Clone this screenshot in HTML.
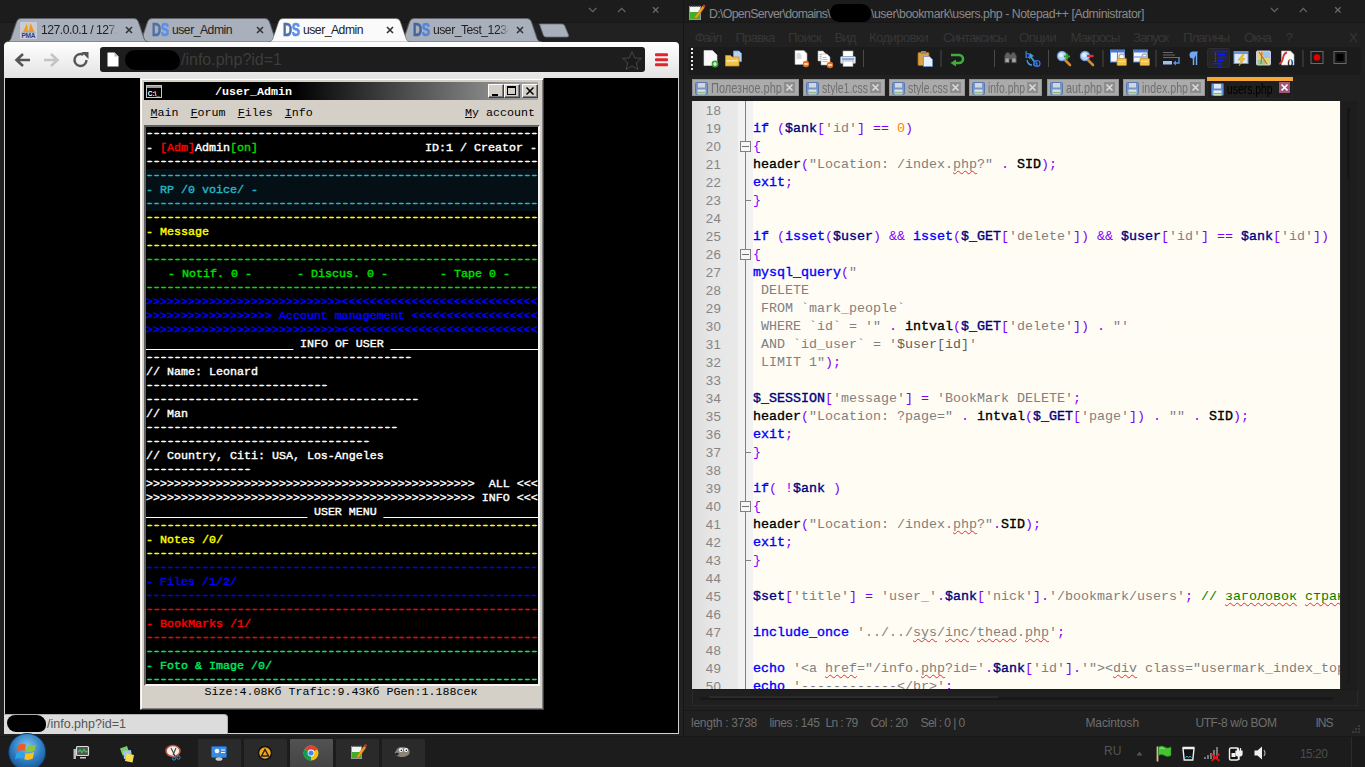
<!DOCTYPE html><html><head><meta charset="utf-8"><title>screenshot</title><style>
*{box-sizing:border-box}
html,body{margin:0;padding:0}
body{width:1365px;height:767px;position:relative;overflow:hidden;background:#1c1c1c;font-family:"Liberation Sans",sans-serif}
.a{position:absolute}
.mono{font-family:"Liberation Mono",monospace}
/* chrome */
#chrome{left:0;top:0;width:684px;height:736px;background:#212121}
.titlebar{left:0;top:0;height:22.5px;background:#1c1c1c;border-bottom:1.5px solid #171717}
.tabtxt{font-size:12.2px;letter-spacing:-.5px;color:#222;white-space:nowrap;overflow:hidden}
#toolbar{left:4px;top:42px;width:675px;height:36px;background:linear-gradient(#ffffff,#f4f4f4 40%,#e3e3e3);border-radius:4px 4px 0 0}
#omni{left:100px;top:47px;width:545px;height:25px;background:#1d1d1d;border-radius:3px}
#page{left:4px;top:78px;width:675px;height:656px;background:#000;border-right:1px solid #cfcfcf;border-left:1px solid #d4d4d4;border-bottom:1px solid #d4d4d4}
/* inner win */
#win{left:140px;top:78px;width:404px;height:632px;background:#d4d0c8;border:1px solid;border-color:#e8e6e0 #404040 #404040 #e8e6e0;box-shadow:inset 1px 1px 0 #fff, inset -1px -1px 0 #808080}
#wtitle{left:3px;top:3px;width:394px;height:18px;background:linear-gradient(90deg,#000 0,#000 38%,#a8a8a8 100%)}
#wtitle .t{left:71px;top:3px;font:bold 11.667px "Liberation Mono",monospace;color:#fff;white-space:pre}
#wmenu{left:3px;top:22px;width:394px;height:24px;font:11.667px/24px "Liberation Mono",monospace;color:#000;white-space:pre}
#wbody{left:3px;top:46px;width:396px;height:561px;background:#000;border:2px solid;border-color:#606060 #f4f4f4 #f4f4f4 #606060;overflow:hidden}
.ln{position:absolute;left:0;width:392px;height:14px;font:11.667px/14px "Liberation Mono",monospace;-webkit-text-stroke:.4px currentColor;white-space:pre;overflow:hidden;color:#fff}
.dl{position:relative;top:-1px;text-shadow:1px 0 0 currentColor,-.7px 0 0 currentColor}
.ul{position:relative;top:2px}
#wfoot{left:3px;top:606px;width:394px;height:14px;font:11.667px/14px "Liberation Mono",monospace;color:#000;text-align:center;white-space:pre}
.wb{top:2px;width:16px;height:14px;background:#d4d0c8;border:1px solid;border-color:#fff #404040 #404040 #fff;box-shadow:inset -1px -1px 0 #808080}
/* npp */
#npp{left:684px;top:0;width:681px;height:736px;background:#202020}
#ed{left:692px;top:101px;width:648px;height:588px;background:#fffcf4;overflow:hidden}
#lnm{left:0;top:0;width:46px;height:100%;background:linear-gradient(90deg,#dcdcdc,#e6e6e6 40%,#e9e9e9)}
#fold{left:46px;top:0;width:15px;height:100%;background:#f2f2f2}
.cl{position:absolute;left:61px;margin-top:1px;height:18px;font:13.333px/18px "Liberation Mono",monospace;white-space:pre;color:#000}
.num{position:absolute;left:0;width:29px;height:18px;text-align:right;font:13.3px/19px "Liberation Sans",sans-serif;color:#858585;letter-spacing:.2px}
.k{color:#0000ff;-webkit-text-stroke:.36px #0000ff}.b{-webkit-text-stroke:.36px currentColor}.s{color:#808080}.o{color:#8000ff}.n{color:#ff8000}.c{color:#008000}.v{color:#000080}
.sq{text-decoration:underline wavy #e03030 1px;text-underline-offset:1.5px;text-decoration-skip-ink:none}
.sqg{text-decoration:underline wavy #e03030 1px;text-underline-offset:1.5px;text-decoration-skip-ink:none}
.hl{background:#fefcf5}
.ntab{top:79px;height:17px;background:#ababab;border:1px solid #949494;font:13.5px/16px "Liberation Sans",sans-serif;color:#6f6f6f;white-space:nowrap;overflow:hidden}
.nt{top:5px;height:18px;font-size:12.3px;line-height:18px;color:#8a8a8a;white-space:nowrap}
.nm{top:28px;height:19px;font-size:13.3px;line-height:19px;color:#363636;white-space:nowrap;}
.st{top:715px;height:17px;font-size:12px;line-height:17px;color:#6e6e6e;white-space:nowrap}
#taskbar{left:0;top:736px;width:1365px;height:31px;background:#1c1c1c;border-top:1px solid #181818}
</style></head><body>
<div id="chrome" class="a">
<div class="a titlebar" style="width:684px"></div>
</div>
<svg class="a" style="left:0;top:0" width="684" height="44" viewBox="0 0 684 44">
<path d="M399.5,42 Q402.5,42 403.8,39 L409.6,21.8 Q410.8,18.5 414,18.5 L527,18.5 Q530.2,18.5 531.4,21.8 L537.2,39 Q538.5,42 541.5,42 Z" fill="#a9b0bc" stroke="#5d626b" stroke-width="1"/>
<path d="M137.5,42 Q140.5,42 141.8,39 L147.6,21.8 Q148.8,18.5 152,18.5 L265,18.5 Q268.2,18.5 269.4,21.8 L275.2,39 Q276.5,42 279.5,42 Z" fill="#a9b0bc" stroke="#5d626b" stroke-width="1"/>
<path d="M6.5,42 Q9.5,42 10.8,39 L16.6,21.8 Q17.8,18.5 21,18.5 L134,18.5 Q137.2,18.5 138.4,21.8 L144.2,39 Q145.5,42 148.5,42 Z" fill="#a9b0bc" stroke="#5d626b" stroke-width="1"/>
<path d="M539.5,24 L562,24 Q564,24 564.8,26 L568.5,35 Q569,37 567,37 L546,37 Q544,37 543.3,35 Z" fill="#a9b0bc" stroke="#6a6f78" stroke-width=".8"/>
<path d="M268.5,42 Q271.5,42 272.8,39 L278.6,21.8 Q279.8,18.5 283,18.5 L396,18.5 Q399.2,18.5 400.4,21.8 L406.2,39 Q407.5,42 410.5,42 Z" fill="#fafafa" stroke="#666" stroke-width=".6"/>
<path d="M589,8 l3.700,3.700 l3.700,-3.700" fill="none" stroke="#666" stroke-width="1.200"/>
<path d="M618,12 l3.700,-3.700 l3.700,3.700" fill="none" stroke="#666" stroke-width="1.200"/>
<path d="M653,7.200 l5.400,5.400 M658.400,7.200 l-5.400,5.400" fill="none" stroke="#6c6c6c" stroke-width="1.300"/>
</svg>
<svg class="a" style="left:20px;top:22px" width="17" height="17" viewBox="0 0 17 17"><rect width="17" height="17" fill="#c9ccd2"/><path d="M3,10 L7,1.5 L8,10 Z M8.5,10 L10.5,1 L14.5,10 Z" fill="#f39a1d"/><path d="M1.5,10.2 Q8,8.5 15.5,10.2 L15.5,10.8 L1.5,10.8Z" fill="#9aa"/><text x="8.5" y="16.4" text-anchor="middle" font-family="Liberation Sans,sans-serif" font-size="6.6" font-weight="bold" fill="#3a3a8c" textLength="14">PMA</text></svg>
<div class="a" style="left:152px;top:20px;width:18px;height:20px;font-weight:bold;font-size:19px;line-height:20px;letter-spacing:-.5px;white-space:nowrap;transform:scaleX(.66);transform-origin:0 0;-webkit-text-stroke:.7px"><span style="-webkit-text-stroke-color:#4f6fa8;color:#4f6fa8">D</span><span style="color:#5b8fe8;-webkit-text-stroke-color:#5b8fe8">S</span></div>
<div class="a" style="left:283px;top:20px;width:18px;height:20px;font-weight:bold;font-size:19px;line-height:20px;letter-spacing:-.5px;white-space:nowrap;transform:scaleX(.66);transform-origin:0 0;-webkit-text-stroke:.7px"><span style="-webkit-text-stroke-color:#4f6fa8;color:#4f6fa8">D</span><span style="color:#5b8fe8;-webkit-text-stroke-color:#5b8fe8">S</span></div>
<div class="a" style="left:413px;top:20px;width:18px;height:20px;font-weight:bold;font-size:19px;line-height:20px;letter-spacing:-.5px;white-space:nowrap;transform:scaleX(.66);transform-origin:0 0;-webkit-text-stroke:.7px"><span style="-webkit-text-stroke-color:#45659c;color:#45659c">D</span><span style="color:#5585dc;-webkit-text-stroke-color:#5585dc">S</span></div>
<div class="a tabtxt" style="left:41px;top:22px;width:77px;height:17px;line-height:17px;-webkit-mask-image:linear-gradient(90deg,#000 86%,transparent 100%);mask-image:linear-gradient(90deg,#000 86%,transparent 100%)">127.0.0.1 / 127.0</div>
<div class="a tabtxt" style="left:172px;top:22px;width:70px;height:17px;line-height:17px">user_Admin</div>
<div class="a tabtxt" style="left:303px;top:22px;width:70px;height:17px;line-height:17px">user_Admin</div>
<div class="a tabtxt" style="left:433px;top:22px;width:76px;height:17px;line-height:17px;-webkit-mask-image:linear-gradient(90deg,#000 86%,transparent 100%);mask-image:linear-gradient(90deg,#000 86%,transparent 100%)">user_Test_12345</div>
<svg class="a" style="left:124px;top:25px" width="10" height="10" viewBox="0 0 10 10"><path d="M2,2 L8,8 M8,2 L2,8" stroke="#333" stroke-width="1.6" fill="none"/></svg>
<svg class="a" style="left:255px;top:25px" width="10" height="10" viewBox="0 0 10 10"><path d="M2,2 L8,8 M8,2 L2,8" stroke="#333" stroke-width="1.6" fill="none"/></svg>
<svg class="a" style="left:385px;top:25px" width="10" height="10" viewBox="0 0 10 10"><path d="M2,2 L8,8 M8,2 L2,8" stroke="#333" stroke-width="1.6" fill="none"/></svg>
<svg class="a" style="left:515px;top:25px" width="10" height="10" viewBox="0 0 10 10"><path d="M2,2 L8,8 M8,2 L2,8" stroke="#333" stroke-width="1.6" fill="none"/></svg>
<div class="a" style="left:683px;top:0;width:1px;height:737px;background:#151515"></div>
<div id="toolbar" class="a"></div><div id="omni" class="a"></div>
<svg class="a" style="left:5px;top:42px" width="674" height="36" viewBox="5 42 674 36">
<path d="M30,60 L17,60 M23,54 L16.5,60 L23,66" fill="none" stroke="#555" stroke-width="2.6" stroke-linejoin="miter"/>
<path d="M44,60 L57,60 M51,54 L57.5,60 L51,66" fill="none" stroke="#c4c4c4" stroke-width="2.6"/>
<path d="M86.5,60 A6,6 0 1 1 83.5,54.8" fill="none" stroke="#555" stroke-width="2.4"/><path d="M81.5,52 L88.5,52 L88.5,59 Z" fill="#555"/>
<path d="M107.5,52.5 L114.5,52.5 L118.5,56.5 L118.5,66.5 L107.5,66.5 Z" fill="#fff"/><path d="M114.5,52.5 L114.5,56.5 L118.5,56.5 Z" fill="#bbb"/>
<path d="M632,51.5 L634.6,58 L641.5,58.4 L636.2,62.8 L638,69.5 L632,65.8 L626,69.5 L627.8,62.8 L622.5,58.4 L629.4,58 Z" fill="#1a1a1a" stroke="#474747" stroke-width="1"/>
<rect x="655" y="53.2" width="13" height="3" rx="1" fill="#e0242a"/>
<rect x="655" y="58.2" width="13" height="3" rx="1" fill="#e0242a"/>
<rect x="655" y="63.2" width="13" height="3" rx="1" fill="#e0242a"/>
</svg>
<div class="a" style="left:181px;top:49px;height:22px;font-size:16px;line-height:22px;color:#3c3c3c;white-space:nowrap">/info.php?id=1</div>
<div class="a" style="left:125px;top:50px;width:55px;height:20px;background:#000;border-radius:10px 12px 9px 11px"></div>
<div id="page" class="a"></div>
<div id="win" class="a">
<div id="wtitle" class="a"><span class="a t">/user_Admin</span>
<div class="a wb" style="left:344px"><i class="a" style="left:3px;top:9px;width:6px;height:2px;background:#000"></i></div><div class="a wb" style="left:360px"><i class="a" style="left:2px;top:1px;width:9px;height:9px;border:1px solid #000;border-top-width:2px"></i></div><div class="a wb" style="left:378px"><svg class="a" style="left:2px;top:1px" width="10" height="10" viewBox="0 0 10 10"><path d="M1.500,1.500 L8.500,8.500 M8.500,1.500 L1.500,8.500" stroke="#000" stroke-width="1.500"/></svg></div>
<svg class="a" style="left:2px;top:3px" width="17" height="14" viewBox="0 0 17 14"><rect x=".5" y=".5" width="15" height="12" fill="#000" stroke="#c8c8c8"/><rect x="1" y="1" width="14" height="2" fill="#9a9a9a"/><text x="1.800" y="10.500" font-family="Liberation Sans,sans-serif" font-size="6.500" font-weight="bold" fill="#fff" textLength="12">C:\_</text></svg>
</div>
<div id="wmenu" class="a"><span class="a" style="left:6.5px"><u>M</u>ain</span><span class="a" style="left:46.6px"><u>F</u>orum</span><span class="a" style="left:93.7px"><u>F</u>iles</span><span class="a" style="left:140.8px"><u>I</u>nfo</span><span class="a" style="right:3px"><u>M</u>y account</span></div>
<div id="wbody" class="a">
<div class="ln" style="top:0px;color:#fff"><span class="dl">--------------------------------------------------------</span></div>
<div class="ln" style="top:14px;color:#fff"><span>- </span><span style="color:#f00">[Adm]</span>Admin<span style="color:#0d0">[on]</span><span class="a" style="right:1px">ID:1 / Creator -</span></div>
<div class="ln" style="top:28px;color:#fff"><span class="dl">--------------------------------------------------------</span></div>
<div class="ln" style="top:42px;color:#22b8c8;background:#050f16"><span class="dl">--------------------------------------------------------</span></div>
<div class="ln" style="top:56px;color:#22b8c8;background:#050f16">- RP /0 voice/ -</div>
<div class="ln" style="top:70px;color:#22b8c8;background:#050f16"><span class="dl">--------------------------------------------------------</span></div>
<div class="ln" style="top:84px;color:#ffff00"><span class="dl">--------------------------------------------------------</span></div>
<div class="ln" style="top:98px;color:#ffff00">- Message</div>
<div class="ln" style="top:112px;color:#ffff00"><span class="dl">--------------------------------------------------------</span></div>
<div class="ln" style="top:126px;color:#00e000"><span class="dl">--------------------------------------------------------</span></div>
<div class="ln" style="top:140px;color:#00e000"><span class="a" style="left:22px">- Notif. 0 -</span><span class="a" style="left:151px">- Discus. 0 -</span><span class="a" style="left:294px">- Tape 0 -</span></div>
<div class="ln" style="top:154px;color:#00e000"><span class="dl">--------------------------------------------------------</span></div>
<div class="ln" style="top:168px;color:#0000ff">&gt;&gt;&gt;&gt;&gt;&gt;&gt;&gt;&gt;&gt;&gt;&gt;&gt;&gt;&gt;&gt;&gt;&gt;&gt;&gt;&gt;&gt;&gt;&gt;&gt;&gt;&gt;&gt;&lt;&lt;&lt;&lt;&lt;&lt;&lt;&lt;&lt;&lt;&lt;&lt;&lt;&lt;&lt;&lt;&lt;&lt;&lt;&lt;&lt;&lt;&lt;&lt;&lt;&lt;&lt;&lt;</div>
<div class="ln" style="top:182px;color:#0000ff">&gt;&gt;&gt;&gt;&gt;&gt;&gt;&gt;&gt;&gt;&gt;&gt;&gt;&gt;&gt;&gt;&gt;&gt; Account management &lt;&lt;&lt;&lt;&lt;&lt;&lt;&lt;&lt;&lt;&lt;&lt;&lt;&lt;&lt;&lt;&lt;&lt;</div>
<div class="ln" style="top:196px;color:#0000ff">&gt;&gt;&gt;&gt;&gt;&gt;&gt;&gt;&gt;&gt;&gt;&gt;&gt;&gt;&gt;&gt;&gt;&gt;&gt;&gt;&gt;&gt;&gt;&gt;&gt;&gt;&gt;&gt;&lt;&lt;&lt;&lt;&lt;&lt;&lt;&lt;&lt;&lt;&lt;&lt;&lt;&lt;&lt;&lt;&lt;&lt;&lt;&lt;&lt;&lt;&lt;&lt;&lt;&lt;&lt;&lt;</div>
<div class="ln" style="top:210px"><span class="ul">_____________________</span> INFO OF USER <span class="ul">_____________________</span></div>
<div class="ln" style="top:224px;color:#fff"><span class="dl">--------------------------------------</span></div>
<div class="ln" style="top:238px;color:#fff">// Name: Leonard</div>
<div class="ln" style="top:252px;color:#fff"><span class="dl">--------------------------</span></div>
<div class="ln" style="top:266px;color:#fff"><span class="dl">---------------------------------------</span></div>
<div class="ln" style="top:280px;color:#fff">// Man</div>
<div class="ln" style="top:294px;color:#fff"><span class="dl">------------------------------------</span></div>
<div class="ln" style="top:308px;color:#fff"><span class="dl">--------------------------------</span></div>
<div class="ln" style="top:322px;color:#fff">// Country, Citi: USA, Los-Angeles</div>
<div class="ln" style="top:336px;color:#fff"><span class="dl">---------------</span></div>
<div class="ln" style="top:350px;color:#fff">&gt;&gt;&gt;&gt;&gt;&gt;&gt;&gt;&gt;&gt;&gt;&gt;&gt;&gt;&gt;&gt;&gt;&gt;&gt;&gt;&gt;&gt;&gt;&gt;&gt;&gt;&gt;&gt;&gt;&gt;&gt;&gt;&gt;&gt;&gt;&gt;&gt;&gt;&gt;&gt;&gt;&gt;&gt;&gt;&gt;&gt;&gt;  ALL &lt;&lt;&lt;</div>
<div class="ln" style="top:364px;color:#fff">&gt;&gt;&gt;&gt;&gt;&gt;&gt;&gt;&gt;&gt;&gt;&gt;&gt;&gt;&gt;&gt;&gt;&gt;&gt;&gt;&gt;&gt;&gt;&gt;&gt;&gt;&gt;&gt;&gt;&gt;&gt;&gt;&gt;&gt;&gt;&gt;&gt;&gt;&gt;&gt;&gt;&gt;&gt;&gt;&gt;&gt;&gt; INFO &lt;&lt;&lt;</div>
<div class="ln" style="top:378px"><span class="ul">_______________________</span> USER MENU <span class="ul">______________________</span></div>
<div class="ln" style="top:392px;color:#ffff00"><span class="dl">--------------------------------------------------------</span></div>
<div class="ln" style="top:406px;color:#ffff00">- Notes /0/</div>
<div class="ln" style="top:420px;color:#ffff00"><span class="dl">--------------------------------------------------------</span></div>
<div class="ln" style="top:434px;color:#0000ff"><span class="dl">--------------------------------------------------------</span></div>
<div class="ln" style="top:448px;color:#0000ff">- Files /1/2/</div>
<div class="ln" style="top:462px;color:#0000ff"><span class="dl">--------------------------------------------------------</span></div>
<div class="ln" style="top:476px;color:#ff0000"><span class="dl">--------------------------------------------------------</span></div>
<div class="ln" style="top:490px;color:#ff0000">- BookMarks /1/</div>
<div class="ln" style="top:504px;color:#ff0000"><span class="dl">--------------------------------------------------------</span></div>
<div class="ln" style="top:518px;color:#00e860"><span class="dl">--------------------------------------------------------</span></div>
<div class="ln" style="top:532px;color:#00e860">- Foto &amp; Image /0/</div>
<div class="ln" style="top:546px;color:#00e860"><span class="dl">--------------------------------------------------------</span></div>
</div>
<div id="wfoot" class="a">Size:4.08Кб Trafic:9.43Кб PGen:1.188сек</div>
</div>
<div class="a" style="left:4px;top:714px;width:224px;height:20px;background:#dcdcdc;border-top:1px solid #b0b0b0;border-right:1px solid #b0b0b0;border-radius:0 4px 0 0;font:12.5px/18px 'Liberation Sans',sans-serif;color:#555;padding-left:43px;white-space:nowrap">/info.php?id=1</div>
<div class="a" style="left:7px;top:715px;width:39px;height:17px;background:#000;border-radius:8px 9px 7px 9px"></div>
<div id="npp" class="a">
<div class="a titlebar" style="width:681px"></div>
</div>
<svg class="a" style="left:684px;top:0" width="681" height="26" viewBox="684 0 681 26">
<path d="M1271,8 l3.500,3.700 l3.500,-3.700" fill="none" stroke="#666" stroke-width="1.200"/>
<path d="M1299.800,12 l3.500,-3.700 l3.500,3.700" fill="none" stroke="#666" stroke-width="1.200"/>
<path d="M1335.200,7.200 l5.400,5.400 M1340.600,7.200 l-5.400,5.400" fill="none" stroke="#6c6c6c" stroke-width="1.300"/>
<rect x="689.5" y="6.5" width="11" height="13" fill="#f4f4f4" stroke="#999" stroke-width="1"/><rect x="690" y="12" width="10" height="7" fill="#3fae2a"/><path d="M690,6 h11" stroke="#444" stroke-width="1.5" stroke-dasharray="1.2 1"/><path d="M695,16.5 L702.5,6 L704.5,7.5 L697,18 L694.5,18.5 Z" fill="#f0a020" stroke="#a86a10" stroke-width=".5"/><circle cx="704" cy="6" r="1.3" fill="#e03030"/>
</svg>
<div class="a nt" style="left:709px;letter-spacing:-0.653px">D:\OpenServer\domains\</div>
<div class="a nt" style="left:871px;letter-spacing:-0.456px">\user\bookmark\users.php - Notepad++ [Administrator]</div>
<div class="a nm" style="left:694.7px;letter-spacing:-1.675px">Файл</div>
<div class="a nm" style="left:735.5px;letter-spacing:-0.988px">Правка</div>
<div class="a nm" style="left:788px;letter-spacing:-0.771px">Поиск</div>
<div class="a nm" style="left:834.5px;letter-spacing:-1.021px">Вид</div>
<div class="a nm" style="left:869px;letter-spacing:-0.683px">Кодировки</div>
<div class="a nm" style="left:943px;letter-spacing:-1.098px">Синтаксисы</div>
<div class="a nm" style="left:1019px;letter-spacing:-0.605px">Опции</div>
<div class="a nm" style="left:1070.5px;letter-spacing:-0.921px">Макросы</div>
<div class="a nm" style="left:1133px;letter-spacing:-1.1px">Запуск</div>
<div class="a nm" style="left:1183px;letter-spacing:-1.129px">Плагины</div>
<div class="a nm" style="left:1244px;letter-spacing:-0.976px">Окна</div>
<div class="a nm" style="left:1285.5px;letter-spacing:-1.397px">?</div>
<div class="a nm" style="left:1349px;letter-spacing:-0.872px">X</div>
<div class="a" style="left:688px;top:47px;width:673px;height:28px;background:#1b1b1b;border-radius:4px"></div>
<div class="a" style="left:691px;top:48px;width:2px;height:24px;background:repeating-linear-gradient(#e8e8e8 0,#e8e8e8 2px,transparent 2px,transparent 4px)"></div>
<svg class="a" style="left:684px;top:47px" width="681" height="28" viewBox="684 47 681 28">
<rect x="863" y="50" width="1" height="17" fill="#4a4a4a"/>
<rect x="940.5" y="50" width="1" height="17" fill="#4a4a4a"/>
<rect x="994" y="50" width="1" height="17" fill="#4a4a4a"/>
<rect x="1048" y="50" width="1" height="17" fill="#4a4a4a"/>
<rect x="1102.5" y="50" width="1" height="17" fill="#4a4a4a"/>
<rect x="1155.5" y="50" width="1" height="17" fill="#4a4a4a"/>
<rect x="1302.5" y="50" width="1" height="17" fill="#4a4a4a"/>
<path d="M704,50.500 h8.500 l4.500,4.500 v10.500 h-13 z" fill="#f8f8f8" stroke="#ddd" stroke-width=".6" stroke-linejoin="round"/><circle cx="715" cy="64" r="3.4" fill="#3aa535"/><path d="M713,64 h4 M715,62 v4" stroke="#fff" stroke-width="1.2"/>
<path d="M733.5,51 h5.5 l2.5,2.5 v8 h-8z" fill="#b9d2f3" stroke="#6f9bdc" stroke-width=".8"/><path d="M725.5,55.5 h5 l1.5,1.5 h7 v9 h-13.5z" fill="#f3c14e" stroke="#c8901c" stroke-width=".8"/><rect x="726.5" y="60" width="11.5" height="1.6" fill="#fbe3a0"/>
<path d="M795,50.5 h9 l3,3 v11 h-12 z" fill="#fff" stroke="#aaa" stroke-width=".6"/><path d="M796.5,54.0 h4 M796.5,56.0 h5 M796.5,58.0 h5" stroke="#999" stroke-width=".7"/><circle cx="806" cy="64" r="3.2" fill="#e8701c"/><rect x="804.2" y="63.3" width="3.6" height="1.4" fill="#fff"/>
<path d="M818,51 h5 l3,3 v7 h-8 z" fill="#fff" stroke="#aaa" stroke-width=".6"/><path d="M819.5,54.5 h4 M819.5,56.5 h5 M819.5,58.5 h5" stroke="#999" stroke-width=".7"/><path d="M821,54 h6 l3,3 v8 h-9 z" fill="#fff" stroke="#aaa" stroke-width=".6"/><path d="M822.5,57.5 h4 M822.5,59.5 h5 M822.5,61.5 h5" stroke="#999" stroke-width=".7"/><circle cx="830" cy="65" r="3.2" fill="#e8701c"/><rect x="828.2" y="64.3" width="3.6" height="1.4" fill="#fff"/>
<rect x="843" y="51" width="10" height="6" fill="#fff" stroke="#aaa" stroke-width=".6"/><rect x="840.5" y="56.5" width="15" height="7" rx="1" fill="#dfe6f0" stroke="#8a97ab" stroke-width=".8"/><rect x="843" y="61" width="10" height="5.5" fill="#fff" stroke="#8a97ab" stroke-width=".6"/><rect x="842" y="58.3" width="12" height="1.4" fill="#6a8fd0"/>
<rect x="918" y="52.5" width="11" height="13" rx="1" fill="#d9a046" stroke="#9a6a1c" stroke-width=".8"/><rect x="921" y="51" width="5" height="3" fill="#888"/><path d="M923.5,56.5 h6 l3,3 v7 h-9z" fill="#e8f0fc" stroke="#6a8fd0" stroke-width=".8"/>
<path d="M951,55 h8 a4,4 0 0 1 0,8 h-4" fill="none" stroke="#3cae3a" stroke-width="2.6"/><path d="M956,59.5 L950.5,63 L956,66.5Z" fill="#3cae3a"/>
<path d="M1004.500,56 l2,-3.500 h2.500 l1,2 h1 l1,-2 h2.500 l2,3.500 v7 h-5 v-3.500 h-2 v3.500 h-5z" fill="#5e5e5e" stroke="#3a3a3a" stroke-width=".6"/><rect x="1005.500" y="58.500" width="3.300" height="3.500" fill="#a8a8a8"/><rect x="1012.300" y="58.500" width="3.300" height="3.500" fill="#a8a8a8"/>
<text x="1025" y="58" font-family="Liberation Sans,sans-serif" font-size="9" font-weight="bold" fill="#3b7be0">b</text><text x="1033" y="66" font-family="Liberation Sans,sans-serif" font-size="9" font-weight="bold" fill="#3b7be0">a</text><path d="M1030,53 l4,3 l-2,1 l3,4 l-1.500,1 l-3,-4 l-1.500,1.500z" fill="#3aa0d8"/><path d="M1027,60 q1,5 5,5" fill="none" stroke="#3aa0d8" stroke-width="1.300"/><circle cx="1037" cy="63.500" r="3" fill="none" stroke="#3b7be0" stroke-width="1.200"/>
<path d="M1064.5,59.500 l5.500,5.500" stroke="#d08a30" stroke-width="2.600" stroke-linecap="round"/><circle cx="1062" cy="56" r="4.600" fill="#b4d6f8" stroke="#6a9ad8" stroke-width="1.200"/><circle cx="1061" cy="55" r="2" fill="#e4f0fc"/><path d="M1064,56.500 h6 M1067,53.500 v6" stroke="#2fa22f" stroke-width="2.200"/>
<path d="M1087.5,59.500 l5.500,5.500" stroke="#d08a30" stroke-width="2.600" stroke-linecap="round"/><circle cx="1085" cy="56" r="4.600" fill="#b4d6f8" stroke="#6a9ad8" stroke-width="1.200"/><circle cx="1084" cy="55" r="2" fill="#e4f0fc"/><path d="M1087,56 h6.500" stroke="#e03030" stroke-width="2.400"/>
<rect x="1110.5" y="50" width="14" height="12" fill="#f4f8fe" stroke="#5a86d0" stroke-width="1"/><rect x="1110.5" y="50" width="14" height="2.500" fill="#4a7ad0"/><path d="M1117.5,52 v10" stroke="#5a86d0" stroke-width="1"/><rect x="1117" y="58.500" width="9.500" height="7" rx=".8" fill="#f2c24a" stroke="#b8861c" stroke-width=".7"/><path d="M1119,58.500 v-1.800 a2.700,2.700 0 0 1 5.400,0 v1.800" fill="none" stroke="#b0b0b0" stroke-width="1.300"/><rect x="1118" y="61" width="7.500" height="1" fill="#fbe39a"/>
<rect x="1133.5" y="50" width="14" height="12" fill="#f4f8fe" stroke="#5a86d0" stroke-width="1"/><rect x="1133.5" y="50" width="14" height="2.500" fill="#4a7ad0"/><path d="M1133.5,57 h14" stroke="#5a86d0" stroke-width="1"/><rect x="1140" y="58.500" width="9.500" height="7" rx=".8" fill="#f2c24a" stroke="#b8861c" stroke-width=".7"/><path d="M1142,58.500 v-1.800 a2.700,2.700 0 0 1 5.400,0 v1.800" fill="none" stroke="#b0b0b0" stroke-width="1.300"/><rect x="1141" y="61" width="7.500" height="1" fill="#fbe39a"/>
<path d="M1163,52.500 h10 M1163,55 h12 M1163,57.500 h16" stroke="#6a6a6a" stroke-width="1.200"/><rect x="1163" y="61" width="9" height="3.500" fill="#9dc0f0"/><path d="M1179,57 v6 h-4" fill="none" stroke="#5a96e8" stroke-width="1.300"/><path d="M1176,60.500 l-3,2.500 l3,2.500z" fill="#5a96e8"/>
<path d="M1196.500,52 v13 M1193.500,52 v13" stroke="#6fa8f4" stroke-width="1.500"/><path d="M1198,51.500 h-5 a3.500,3.500 0 0 0 0,7 h1z" fill="#6fa8f4"/>
<rect x="1207.500" y="48.500" width="22" height="19" rx="2" fill="#262626" stroke="#2e2e2e"/>
<path d="M1213,51.500 h14 M1218,54.500 h7 M1218,57.500 h9 M1218,60.500 h6 M1213,63.500 h9 M1218,66 h3" stroke="#0a1cff" stroke-width="1.500"/><path d="M1215.500,53 v9" stroke="#e02020" stroke-width="1.200" stroke-dasharray="1.200 1.200"/>
<rect x="1234" y="51.500" width="14" height="12" fill="#dce8f8" stroke="#6a96d8" stroke-width="1"/><rect x="1234" y="51.500" width="14" height="2.500" fill="#6a96d8"/><path d="M1243,54 l-5,6 h3 l-2,6 l6,-7.500 h-3 l2,-4.500z" fill="#f2c230" stroke="#c89a10" stroke-width=".5"/>
<rect x="1256.500" y="51" width="14" height="14" rx="1" fill="#d6dc74" stroke="#c8c8e8" stroke-width="1"/><rect x="1263" y="52" width="7" height="6" fill="#9ec6ee"/><rect x="1257.500" y="60" width="8" height="4.500" fill="#8fd08a"/><path d="M1259,52 l8,12 M1262,52 l-1,12" stroke="#e85040" stroke-width="1.100"/>
<path d="M1281.500,51 h9 l3.500,3.500 v10.500 h-12.500z" fill="#fafafa" stroke="#bbb" stroke-width=".6"/><path d="M1279,64 q3,-1 4,-6 q1,-5 4,-5.500" fill="none" stroke="#e03030" stroke-width="1.800"/><text x="1287.500" y="64.500" font-family="Liberation Serif,serif" font-size="8.500" font-weight="bold" fill="#000">()</text>
<rect x="1311" y="51.500" width="12" height="12" fill="#1a1a1a" stroke="#6a6a6a" stroke-width="1"/><circle cx="1317" cy="57.500" r="3.300" fill="#e00000"/>
<rect x="1334" y="51.500" width="12" height="12" fill="#1a1a1a" stroke="#6a6a6a" stroke-width="1"/><rect x="1336.500" y="54" width="7" height="7" fill="#000"/>
</svg>
<div class="a ntab" style="left:692px;width:107px"><span class="a" style="left:18px;top:0;transform:scaleX(0.76);transform-origin:0 0;font-size:14.5px">Полезное.php</span></div>
<svg class="a" opacity=".72" style="left:695px;top:82px" width="13" height="13" viewBox="0 0 13 13"><rect x=".5" y=".5" width="12" height="12" rx="1" fill="#5f8fd8" stroke="#3a66b0"/><rect x="3" y="1" width="7" height="4.500" fill="#dfe8f6"/><rect x="2.500" y="7.500" width="8" height="5" fill="#f4f4f4"/><rect x="2.500" y="9.800" width="8" height="1.600" fill="#86c060"/></svg>
<svg class="a" style="left:784px;top:82px" width="11" height="11" viewBox="0 0 11 11"><rect width="11" height="11" fill="#8e8e8e"/><path d="M2.500,2.500 L8.500,8.500 M8.500,2.500 L2.500,8.500" stroke="#dadada" stroke-width="1.700"/></svg>
<div class="a ntab" style="left:803px;width:82px"><span class="a" style="left:18px;top:0;transform:scaleX(0.723);transform-origin:0 0;font-size:14.5px">style1.css</span></div>
<svg class="a" opacity=".72" style="left:806px;top:82px" width="13" height="13" viewBox="0 0 13 13"><rect x=".5" y=".5" width="12" height="12" rx="1" fill="#5f8fd8" stroke="#3a66b0"/><rect x="3" y="1" width="7" height="4.500" fill="#dfe8f6"/><rect x="2.500" y="7.500" width="8" height="5" fill="#f4f4f4"/><rect x="2.500" y="9.800" width="8" height="1.600" fill="#86c060"/></svg>
<svg class="a" style="left:870px;top:82px" width="11" height="11" viewBox="0 0 11 11"><rect width="11" height="11" fill="#8e8e8e"/><path d="M2.500,2.500 L8.500,8.500 M8.500,2.500 L2.500,8.500" stroke="#dadada" stroke-width="1.700"/></svg>
<div class="a ntab" style="left:889px;width:76px"><span class="a" style="left:18px;top:0;transform:scaleX(0.72);transform-origin:0 0;font-size:14.5px">style.css</span></div>
<svg class="a" opacity=".72" style="left:892px;top:82px" width="13" height="13" viewBox="0 0 13 13"><rect x=".5" y=".5" width="12" height="12" rx="1" fill="#5f8fd8" stroke="#3a66b0"/><rect x="3" y="1" width="7" height="4.500" fill="#dfe8f6"/><rect x="2.500" y="7.500" width="8" height="5" fill="#f4f4f4"/><rect x="2.500" y="9.800" width="8" height="1.600" fill="#86c060"/></svg>
<svg class="a" style="left:950px;top:82px" width="11" height="11" viewBox="0 0 11 11"><rect width="11" height="11" fill="#8e8e8e"/><path d="M2.500,2.500 L8.500,8.500 M8.500,2.500 L2.500,8.500" stroke="#dadada" stroke-width="1.700"/></svg>
<div class="a ntab" style="left:969px;width:73px"><span class="a" style="left:18px;top:0;transform:scaleX(0.717);transform-origin:0 0;font-size:14.5px">info.php</span></div>
<svg class="a" opacity=".72" style="left:972px;top:82px" width="13" height="13" viewBox="0 0 13 13"><rect x=".5" y=".5" width="12" height="12" rx="1" fill="#5f8fd8" stroke="#3a66b0"/><rect x="3" y="1" width="7" height="4.500" fill="#dfe8f6"/><rect x="2.500" y="7.500" width="8" height="5" fill="#f4f4f4"/><rect x="2.500" y="9.800" width="8" height="1.600" fill="#86c060"/></svg>
<svg class="a" style="left:1027px;top:82px" width="11" height="11" viewBox="0 0 11 11"><rect width="11" height="11" fill="#8e8e8e"/><path d="M2.500,2.500 L8.500,8.500 M8.500,2.500 L2.500,8.500" stroke="#dadada" stroke-width="1.700"/></svg>
<div class="a ntab" style="left:1047px;width:72px"><span class="a" style="left:18px;top:0;transform:scaleX(0.744);transform-origin:0 0;font-size:14.5px">aut.php</span></div>
<svg class="a" opacity=".72" style="left:1050px;top:82px" width="13" height="13" viewBox="0 0 13 13"><rect x=".5" y=".5" width="12" height="12" rx="1" fill="#5f8fd8" stroke="#3a66b0"/><rect x="3" y="1" width="7" height="4.500" fill="#dfe8f6"/><rect x="2.500" y="7.500" width="8" height="5" fill="#f4f4f4"/><rect x="2.500" y="9.800" width="8" height="1.600" fill="#86c060"/></svg>
<svg class="a" style="left:1104px;top:82px" width="11" height="11" viewBox="0 0 11 11"><rect width="11" height="11" fill="#8e8e8e"/><path d="M2.500,2.500 L8.500,8.500 M8.500,2.500 L2.500,8.500" stroke="#dadada" stroke-width="1.700"/></svg>
<div class="a ntab" style="left:1123px;width:82px"><span class="a" style="left:18px;top:0;transform:scaleX(0.731);transform-origin:0 0;font-size:14.5px">index.php</span></div>
<svg class="a" opacity=".72" style="left:1126px;top:82px" width="13" height="13" viewBox="0 0 13 13"><rect x=".5" y=".5" width="12" height="12" rx="1" fill="#5f8fd8" stroke="#3a66b0"/><rect x="3" y="1" width="7" height="4.500" fill="#dfe8f6"/><rect x="2.500" y="7.500" width="8" height="5" fill="#f4f4f4"/><rect x="2.500" y="9.800" width="8" height="1.600" fill="#86c060"/></svg>
<svg class="a" style="left:1190px;top:82px" width="11" height="11" viewBox="0 0 11 11"><rect width="11" height="11" fill="#8e8e8e"/><path d="M2.500,2.500 L8.500,8.500 M8.500,2.500 L2.500,8.500" stroke="#dadada" stroke-width="1.700"/></svg>
<div class="a" style="left:1207px;top:77px;width:86px;height:4px;background:#f5a833"></div>
<div class="a" style="left:1207px;top:81px;width:86px;height:18px;background:#1f1f1f;border:1px solid #262626;border-top:0"></div>
<svg class="a" style="left:1211px;top:83px" width="13" height="13" viewBox="0 0 13 13"><rect x=".5" y=".5" width="12" height="12" rx="1" fill="#5f8fd8" stroke="#3a66b0"/><rect x="3" y="1" width="7" height="4.500" fill="#dfe8f6"/><rect x="2.500" y="7.500" width="8" height="5" fill="#f4f4f4"/><rect x="2.500" y="9.800" width="8" height="1.600" fill="#86c060"/></svg>
<div class="a" style="left:1227px;top:81px;height:17px;font-size:14px;line-height:17px;color:#000;transform:scaleX(0.74);transform-origin:0 0;white-space:nowrap">users.php</div>
<svg class="a" style="left:1279px;top:82px" width="11" height="11" viewBox="0 0 11 11"><rect width="11" height="11" fill="#a05878"/><path d="M2.500,2.500 L8.500,8.500 M8.500,2.500 L2.500,8.500" stroke="#fff" stroke-width="1.700"/></svg>
<div class="a" style="left:830px;top:4px;width:41px;height:18px;background:#000;border-radius:9px 10px 8px 10px"></div>
<div id="ed" class="a"><div id="lnm" class="a"></div><div id="fold" class="a"></div>
<div class="num" style="top:0px">18</div>
<div class="num" style="top:18px">19</div>
<div class="cl" style="top:18px"><span class="k">if</span> <span class="o">(</span><span class="v b">$ank</span><span class="o">[</span><span class="s">'id'</span><span class="o">]</span> <span class="o">==</span> <span class="n">0</span><span class="o">)</span></div>
<div class="num" style="top:36px">20</div>
<div class="cl" style="top:36px"><span class="o">{</span></div>
<div class="num" style="top:54px">21</div>
<div class="cl" style="top:54px"><span class="b">header</span><span class="o">(</span><span class="s">"Location: /index.<span class="sq">php</span>?"</span> <span class="o">.</span> <span class="b">SID</span><span class="o">);</span></div>
<div class="num" style="top:72px">22</div>
<div class="cl" style="top:72px"><span class="k">exit</span><span class="o">;</span></div>
<div class="num" style="top:90px">23</div>
<div class="cl" style="top:90px"><span class="o">}</span></div>
<div class="num" style="top:108px">24</div>
<div class="num" style="top:126px">25</div>
<div class="cl" style="top:126px"><span class="k">if</span> <span class="o">(</span><span class="k">isset</span><span class="o">(</span><span class="v b">$user</span><span class="o">)</span> <span class="o">&amp;&amp;</span> <span class="k">isset</span><span class="o">(</span><span class="v b">$_GET</span><span class="o">[</span><span class="s">'delete'</span><span class="o">])</span> <span class="o">&amp;&amp;</span> <span class="v b">$user</span><span class="o">[</span><span class="s">'id'</span><span class="o">]</span> <span class="o">==</span> <span class="v b">$ank</span><span class="o">[</span><span class="s">'id'</span><span class="o">])</span></div>
<div class="num" style="top:144px">26</div>
<div class="cl" style="top:144px"><span class="o">{</span></div>
<div class="num" style="top:162px">27</div>
<div class="cl" style="top:162px"><span class="k">mysql_query</span><span class="o">(</span><span class="s hl">"                                                                                </span></div>
<div class="num" style="top:180px">28</div>
<div class="cl" style="top:180px"><span class="s hl"> DELETE                                                                                </span></div>
<div class="num" style="top:198px">29</div>
<div class="cl" style="top:198px"><span class="s hl"> FROM `mark_people`                                                                                </span></div>
<div class="num" style="top:216px">30</div>
<div class="cl" style="top:216px"><span class="s hl"> WHERE `id` = '"</span> <span class="o">.</span> <span class="b">intval</span><span class="o">(</span><span class="v b">$_GET</span><span class="o">[</span><span class="s">'delete'</span><span class="o">])</span> <span class="o">.</span> <span class="s hl">"'    </span></div>
<div class="num" style="top:234px">31</div>
<div class="cl" style="top:234px"><span class="s hl"> AND `id_user` = '<span style="color:#606060">$user[id]</span>'    </span><span class="hl">                                                                                      </span></div>
<div class="num" style="top:252px">32</div>
<div class="cl" style="top:252px"><span class="s"> LIMIT 1"</span><span class="o">);</span></div>
<div class="num" style="top:270px">33</div>
<div class="num" style="top:288px">34</div>
<div class="cl" style="top:288px"><span class="v b">$_SESSION</span><span class="o">[</span><span class="s">'message'</span><span class="o">]</span> <span class="o">=</span> <span class="s">'BookMark DELETE'</span><span class="o">;</span></div>
<div class="num" style="top:306px">35</div>
<div class="cl" style="top:306px"><span class="b">header</span><span class="o">(</span><span class="s">"Location: ?page="</span> <span class="o">.</span> <span class="b">intval</span><span class="o">(</span><span class="v b">$_GET</span><span class="o">[</span><span class="s">'page'</span><span class="o">])</span> <span class="o">.</span> <span class="s">""</span> <span class="o">.</span> <span class="b">SID</span><span class="o">);</span></div>
<div class="num" style="top:324px">36</div>
<div class="cl" style="top:324px"><span class="k">exit</span><span class="o">;</span></div>
<div class="num" style="top:342px">37</div>
<div class="cl" style="top:342px"><span class="o">}</span></div>
<div class="num" style="top:360px">38</div>
<div class="num" style="top:378px">39</div>
<div class="cl" style="top:378px"><span class="k">if</span><span class="o">(</span> <span class="o">!</span><span class="v b">$ank</span> <span class="o">)</span></div>
<div class="num" style="top:396px">40</div>
<div class="cl" style="top:396px"><span class="o">{</span></div>
<div class="num" style="top:414px">41</div>
<div class="cl" style="top:414px"><span class="b">header</span><span class="o">(</span><span class="s">"Location: /index.<span class="sq">php</span>?"</span><span class="o">.</span><span class="b">SID</span><span class="o">);</span></div>
<div class="num" style="top:432px">42</div>
<div class="cl" style="top:432px"><span class="k">exit</span><span class="o">;</span></div>
<div class="num" style="top:450px">43</div>
<div class="cl" style="top:450px"><span class="o">}</span></div>
<div class="num" style="top:468px">44</div>
<div class="num" style="top:486px">45</div>
<div class="cl" style="top:486px"><span class="v b">$set</span><span class="o">[</span><span class="s">'title'</span><span class="o">]</span> <span class="o">=</span> <span class="s">'user_'</span><span class="o">.</span><span class="v b">$ank</span><span class="o">[</span><span class="s">'nick'</span><span class="o">].</span><span class="s">'/bookmark/users'</span><span class="o">;</span> <span class="c">// </span><span class="c sqg">заголовок</span> <span class="c sqg">страницы</span></div>
<div class="num" style="top:504px">46</div>
<div class="num" style="top:522px">47</div>
<div class="cl" style="top:522px"><span class="k">include_once</span> <span class="s">'../../<span class="sq">sys</span>/<span class="sq">inc</span>/<span class="sq">thead</span>.<span class="sq">php</span>'</span><span class="o">;</span></div>
<div class="num" style="top:540px">48</div>
<div class="num" style="top:558px">49</div>
<div class="cl" style="top:558px"><span class="k">echo</span> <span class="s">'&lt;a <span class="sq">href</span>="/info.<span class="sq">php</span>?id='</span><span class="o">.</span><span class="v b">$ank</span><span class="o">[</span><span class="s">'id'</span><span class="o">].</span><span class="s">'"&gt;&lt;<span class="sq">div</span> class="usermark_index_top"&gt;'</span></div>
<div class="num" style="top:576px">50</div>
<div class="cl" style="top:576px"><span class="k">echo</span> <span class="s">'------------&lt;/<span class="sq">br</span>&gt;'</span><span class="o">;</span></div>
<div class="a" style="left:53px;top:0;width:1px;height:100%;background:#808080"></div>
<div class="a" style="left:48px;top:40px;width:11px;height:11px;background:#f6f6f6;border:1px solid #808080"><i class="a" style="left:1px;top:4px;width:7px;height:1px;background:#707070"></i></div>
<div class="a" style="left:48px;top:148px;width:11px;height:11px;background:#f6f6f6;border:1px solid #808080"><i class="a" style="left:1px;top:4px;width:7px;height:1px;background:#707070"></i></div>
<div class="a" style="left:48px;top:400px;width:11px;height:11px;background:#f6f6f6;border:1px solid #808080"><i class="a" style="left:1px;top:4px;width:7px;height:1px;background:#707070"></i></div>
<div class="a" style="left:53px;top:99px;width:6px;height:1px;background:#808080"></div>
<div class="a" style="left:53px;top:351px;width:6px;height:1px;background:#808080"></div>
<div class="a" style="left:53px;top:459px;width:6px;height:1px;background:#808080"></div>
</div>
<div class="a" style="left:1340px;top:101px;width:18px;height:588px;background:#1d1d1d;border-left:1px solid #2a2a2a"></div>
<div class="a" style="left:1347px;top:108px;width:3px;height:70px;background:#161616;border-radius:1px"></div>
<div class="a" style="left:1348px;top:178px;width:2px;height:505px;background:#191919"></div>
<div class="a" style="left:692px;top:689px;width:666px;height:17px;background:#1f1f1f;border:1px solid #2a2a2a;border-top-color:#1a1a1a"></div>
<div class="a" style="left:700px;top:697px;width:633px;height:3px;background:#181818"></div>
<div class="a" style="left:709px;top:696px;width:289px;height:2px;background:#2a2a2a"></div>
<div class="a" style="left:684px;top:710px;width:681px;height:1px;background:#181818"></div>
<div class="a st" style="left:691px;letter-spacing:-0.261px">length : 3738</div>
<div class="a st" style="left:769.5px;letter-spacing:-0.428px">lines : 145</div>
<div class="a st" style="left:825.5px;letter-spacing:-0.671px">Ln : 79</div>
<div class="a st" style="left:870.5px;letter-spacing:-0.544px">Col : 20</div>
<div class="a st" style="left:920.5px;letter-spacing:-0.589px">Sel : 0 | 0</div>
<div class="a st" style="left:1085.5px;letter-spacing:-0.133px">Macintosh</div>
<div class="a st" style="left:1195.5px;letter-spacing:-0.436px">UTF-8 w/o BOM</div>
<div class="a st" style="left:1315.5px;letter-spacing:-1.001px">INS</div>
<svg class="a" style="left:1350px;top:723px" width="12" height="12" viewBox="0 0 12 12"><g fill="#3a3a3a"><rect x="8" y="2" width="2" height="2"/><rect x="5" y="5" width="2" height="2"/><rect x="8" y="5" width="2" height="2"/><rect x="2" y="8" width="2" height="2"/><rect x="5" y="8" width="2" height="2"/><rect x="8" y="8" width="2" height="2"/></g></svg>
<div id="taskbar" class="a"></div>
<div class="a" style="left:198px;top:739px;width:43px;height:28px;background:#2a2a2a;border-radius:1px 1px 0 0"></div>
<div class="a" style="left:244px;top:739px;width:43px;height:28px;background:#2a2a2a;border-radius:1px 1px 0 0"></div>
<div class="a" style="left:290px;top:739px;width:43px;height:28px;background:linear-gradient(#525252,#444);border-radius:1px 1px 0 0"></div>
<div class="a" style="left:336px;top:739px;width:43px;height:28px;background:#2a2a2a;border-radius:1px 1px 0 0"></div>
<div class="a" style="left:382px;top:739px;width:43px;height:28px;background:#2a2a2a;border-radius:1px 1px 0 0"></div>
<div class="a" style="left:1351px;top:737px;width:14px;height:30px;background:#1a1a1a;border-left:1px solid #2b2b2b"></div>
<svg class="a" style="left:0;top:730px" width="1365" height="37" viewBox="0 730 1365 37">
<defs><radialGradient id="orb" cx=".5" cy=".35" r=".7"><stop offset="0" stop-color="#7fc4ee"/><stop offset=".55" stop-color="#2f7fc4"/><stop offset="1" stop-color="#124a86"/></radialGradient><radialGradient id="orb2" cx=".5" cy="1" r=".5"><stop offset="0" stop-color="#35e0ff"/><stop offset="1" stop-color="#35e0ff" stop-opacity="0"/></radialGradient></defs>
<circle cx="27.2" cy="752" r="18.5" fill="url(#orb)" stroke="#0d3a6a" stroke-width="1"/><ellipse cx="27.2" cy="768" rx="14" ry="9" fill="url(#orb2)"/>
<path d="M18,745.5 q4,-2.500 8,-.8 l-1.300,6.300 q-4,-1.700 -8,.8z" fill="#f25a22"/><path d="M27.300,745.200 q4,1.700 8.500,-.8 l-1.300,6.300 q-4.500,2.500 -8.500,.8z" fill="#8cc63f"/><path d="M16.300,753.200 q4,-2.500 8,-.8 l-1.300,6.300 q-4,-1.700 -8,.8z" fill="#2ea3e8"/><path d="M25.600,752.900 q4,1.700 8.500,-.8 l-1.300,6.300 q-4.500,2.500 -8.500,.8z" fill="#fcc21b"/>
<rect x="76.500" y="746.500" width="12" height="9" rx="1" fill="#555" stroke="#ddd" stroke-width="1.200"/><path d="M78,752 l2,-2 l2,2.500 l2,-3 l2,2.500 l1.500,-1" fill="none" stroke="#30d050" stroke-width="1.200"/><rect x="80" y="757" width="6" height="1.500" fill="#ccc"/><rect x="73.500" y="749" width="2.500" height="10" fill="#bbb"/>
<path d="M120,748.500 l7,-2.500 l2.500,7 l-7,2.500z" fill="#7cc86a"/><path d="M123,751 l8,-1 l1,8 l-8,1z" fill="#9cc4ee"/><path d="M126.500,753.500 l7.500,1.500 l-1.500,7.500 l-7.500,-1.500z" fill="#f4dc50"/>
<ellipse cx="173" cy="751" rx="7" ry="5.500" fill="#f4f0ec" stroke="#c0503a" stroke-width="1.600"/><path d="M171,748 l4,8 M176,748 l-3,7" stroke="#444" stroke-width="1.100"/><circle cx="174" cy="758.500" r="1.600" fill="none" stroke="#2a9be8" stroke-width="1"/><circle cx="178.500" cy="757.500" r="1.600" fill="none" stroke="#2a9be8" stroke-width="1"/>
<rect x="211.500" y="746.500" width="15" height="11" rx="1" fill="#3a8be0" stroke="#1e62b8" stroke-width="1"/><circle cx="217" cy="751" r="2.300" fill="#f4f4f4"/><path d="M221,750 h4 M221,752.500 h4" stroke="#fff" stroke-width="1.100"/><ellipse cx="219" cy="759" rx="3.500" ry="1.800" fill="#ccc"/>
<circle cx="265" cy="753" r="6.500" fill="#f5a81c" stroke="#111" stroke-width="1.500"/><path d="M261.500,756 l3.500,-6.500 l3.500,6.500z" fill="none" stroke="#222" stroke-width="1.500"/>
<g transform="translate(0,1)"><circle cx="311" cy="752" r="7.500" fill="#f4c20d"/><path d="M311,752 L304.500,748.300 A7.500,7.500 0 0 1 317.500,748.300 Z" fill="#db4437"/><path d="M311,752 L304.500,748.300 A7.500,7.500 0 0 0 311,759.500 Z" fill="#0f9d58"/><circle cx="311" cy="752" r="3.400" fill="#fff"/><circle cx="311" cy="752" r="2.600" fill="#4285f4"/></g>
<rect x="351.500" y="746.500" width="10" height="12" fill="#f4f4f4" stroke="#999"/><rect x="352" y="752" width="9" height="6" fill="#3fae2a"/><path d="M352,746 h10" stroke="#444" stroke-width="1.500" stroke-dasharray="1.200 1"/><path d="M357,756 L364,746 L366,747.500 L359,757.500 L356.500,758 Z" fill="#f0a020" stroke="#a86a10" stroke-width=".5"/><circle cx="365.500" cy="745.500" r="1.300" fill="#e03030"/>
<path d="M396,751 q1,-4 6,-4 q6,0 7.500,3.500 q1,3 -2,5 q-3,2 -7,1.500 q-4,-.5 -5.500,-3 q-1,-2 1,-3z" fill="#8a8478"/><circle cx="401" cy="750" r="2" fill="#fff"/><circle cx="406" cy="750" r="2" fill="#fff"/><circle cx="401.300" cy="750.300" r=".8" fill="#000"/><circle cx="406.300" cy="750.300" r=".8" fill="#000"/><ellipse cx="397" cy="754" rx="1.800" ry="1.300" fill="#222"/>
<path d="M1136.500,755.500 l3,-4 l3,4z" fill="#555"/>
<path d="M1157.500,746.500 v15" stroke="#e0b890" stroke-width="1.800"/><path d="M1158.500,747 q3,-2 6,0 q3,2 6.500,0 v8.500 q-3.500,2 -6.500,0 q-3,-2 -6,0z" fill="#46c232" stroke="#1e8a16" stroke-width=".6"/><path d="M1159.500,748.500 q2.500,-1.500 5,0" fill="none" stroke="#9be88a" stroke-width="1"/>
<path d="M1183,748.500 h11 l-1.200,11.500 h-8.600z" fill="#111" stroke="#f0f0f0" stroke-width="1.400"/><path d="M1182.500,747.500 h12" stroke="#f0f0f0" stroke-width="1.500"/><path d="M1185.500,757.500 l1.500,-1.200 l1.500,1.200 l1.500,-1.200 l1.500,1.200" fill="none" stroke="#20c8e8" stroke-width="1"/>
<path d="M1205,759 v-2 M1208,759 v-4 M1211,759 v-6 M1214,759 v-9 M1217,759 v-12" stroke="#777" stroke-width="2"/><path d="M1211.500,754 l8,7 M1219.500,754 l-8,7" stroke="#e01010" stroke-width="1.800"/>
<rect x="1229.500" y="748" width="9" height="12" rx="1.500" fill="#111" stroke="#f0f0f0" stroke-width="1.400"/><rect x="1231.500" y="753" width="4" height="4" fill="#f0f0f0"/><path d="M1236,751 h6 v3 q0,2 -3,2 q-3,0 -3,-2z M1237.500,748 v3 M1240.500,748 v3 M1239,756 v4" fill="#f0f0f0" stroke="#f0f0f0" stroke-width="1.200"/>
<path d="M1254.500,750.500 h3 l4.500,-4 v13 l-4.500,-4 h-3z" fill="#f0f0f0"/><path d="M1264,750 q2,3 0,6" fill="none" stroke="#aaa" stroke-width="1.100"/>
</svg>
<div class="a" style="left:1104px;top:743px;font-size:12px;line-height:16px;color:#545454">RU</div>
<div class="a" style="left:1300px;top:746px;font-size:12px;line-height:17px;color:#4c4c4c;letter-spacing:-.55px">15:20</div>
</body></html>
